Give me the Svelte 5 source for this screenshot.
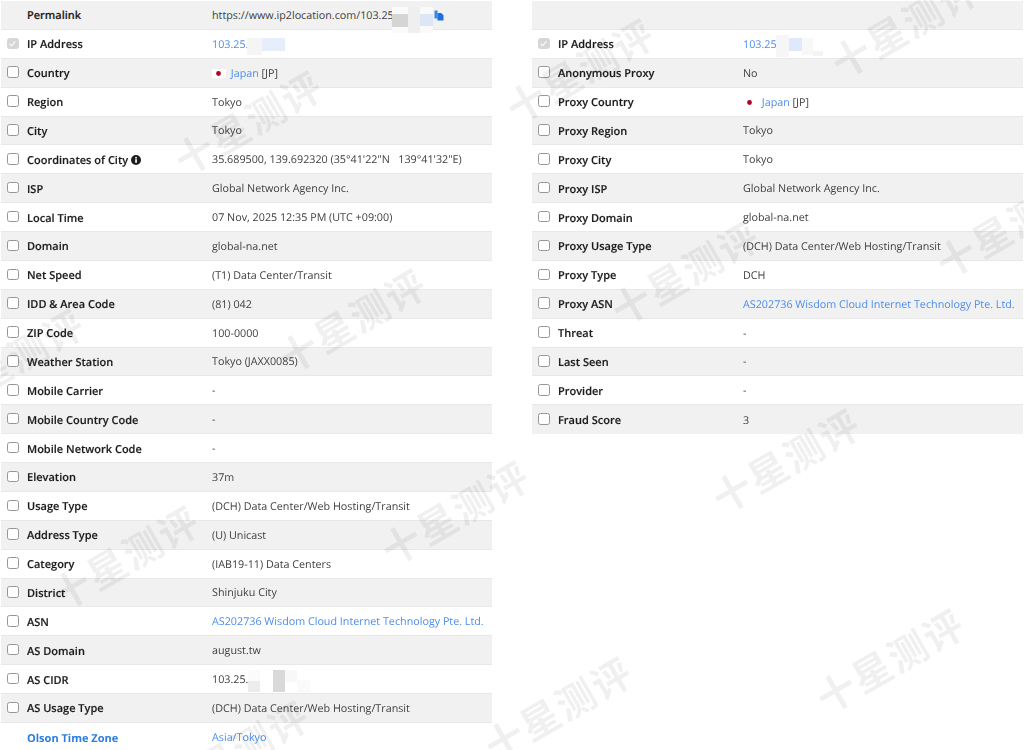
<script>
	const left = [
		{ label: 'Permalink', value: 'https://www.ip2location.com/103.25', check: 'none', copy: true },
		{ label: 'IP Address', value: '103.25.', link: true, check: 'locked' },
		{ label: 'Country', country: true },
		{ label: 'Region', value: 'Tokyo' },
		{ label: 'City', value: 'Tokyo' },
		{ label: 'Coordinates of City', value: '35.689500, 139.692320 (35°41\'22"N \u00a0 139°41\'32"E)', info: true },
		{ label: 'ISP', value: 'Global Network Agency Inc.' },
		{ label: 'Local Time', value: '07 Nov, 2025 12:35 PM (UTC +09:00)' },
		{ label: 'Domain', value: 'global-na.net' },
		{ label: 'Net Speed', value: '(T1) Data Center/Transit' },
		{ label: 'IDD & Area Code', value: '(81) 042' },
		{ label: 'ZIP Code', value: '100-0000' },
		{ label: 'Weather Station', value: 'Tokyo (JAXX0085)' },
		{ label: 'Mobile Carrier', value: '-' },
		{ label: 'Mobile Country Code', value: '-' },
		{ label: 'Mobile Network Code', value: '-' },
		{ label: 'Elevation', value: '37m' },
		{ label: 'Usage Type', value: '(DCH) Data Center/Web Hosting/Transit' },
		{ label: 'Address Type', value: '(U) Unicast' },
		{ label: 'Category', value: '(IAB19-11) Data Centers' },
		{ label: 'District', value: 'Shinjuku City' },
		{ label: 'ASN', value: 'AS202736 Wisdom Cloud Internet Technology Pte. Ltd.', link: true },
		{ label: 'AS Domain', value: 'august.tw' },
		{ label: 'AS CIDR', value: '103.25.' },
		{ label: 'AS Usage Type', value: '(DCH) Data Center/Web Hosting/Transit' },
		{ label: 'Olson Time Zone', value: 'Asia/Tokyo', link: true, check: 'none', labelLink: true }
	];

	const right = [
		{ label: '', value: '', check: 'none' },
		{ label: 'IP Address', value: '103.25', link: true, check: 'locked' },
		{ label: 'Anonymous Proxy', value: 'No' },
		{ label: 'Proxy Country', country: true },
		{ label: 'Proxy Region', value: 'Tokyo' },
		{ label: 'Proxy City', value: 'Tokyo' },
		{ label: 'Proxy ISP', value: 'Global Network Agency Inc.' },
		{ label: 'Proxy Domain', value: 'global-na.net' },
		{ label: 'Proxy Usage Type', value: '(DCH) Data Center/Web Hosting/Transit' },
		{ label: 'Proxy Type', value: 'DCH' },
		{ label: 'Proxy ASN', value: 'AS202736 Wisdom Cloud Internet Technology Pte. Ltd.', link: true },
		{ label: 'Threat', value: '-' },
		{ label: 'Last Seen', value: '-' },
		{ label: 'Provider', value: '-' },
		{ label: 'Fraud Score', value: '3' }
	];

	// centre points of the repeated watermark
	const marks = [
		[248, 122], [352, 320], [455, 512], [558, 708],
		[580, 70], [685, 272], [786, 460], [890, 660],
		[905, 25], [1010, 225], [10, 360], [125, 557], [235, 752]
	];

	// mosaic patches over the masked addresses: x, y, w, h, colour
	const patches = [
		// permalink
		[392, 7, 41, 26, '#fafafa'],
		[392, 14, 16, 13, '#d4d6d4'],
		[408, 7, 12, 26, '#efefef'],
		[420, 14, 13, 12, '#dde6f6'],
		// left ip
		[247, 38, 15, 17, '#f5f5f5'],
		[262, 38, 23, 13, '#e6eefc'],
		// right ip
		[776, 35, 13, 22, '#f6f6f8'],
		[789, 38, 13, 13, '#dfe9fb'],
		[802, 38, 11, 17, '#f8f8f8'],
		[813, 51, 10, 5, '#f4f4f4'],
		// cidr
		[248, 670, 12, 11, '#fbfbfb'],
		[248, 681, 12, 11, '#ececec'],
		[273, 670, 12, 22, '#d9d9d9'],
		[285, 670, 12, 12, '#f8f8f8'],
		[297, 680, 13, 12, '#fafafa']
	];
</script>

{#snippet checkbox(kind)}
	{#if kind === 'locked'}
		<span class="box locked">
			<svg viewBox="0 0 12 12" width="11" height="11"><path d="M2.8 6.2 5 8.4 9.2 3.6" fill="none" stroke="#f4f4f4" stroke-width="1.6" /></svg>
		</span>
	{:else if kind === 'none'}
		<span class="box empty"></span>
	{:else}
		<span class="box"></span>
	{/if}
{/snippet}

{#snippet table(rows)}
	<div class="table">
		{#each rows as row}
			<div class="row">
				{@render checkbox(row.check)}
				<div class="label" class:link={row.labelLink}>
					{row.label}
					{#if row.info}
						<svg class="info" viewBox="0 0 10 10" width="10" height="10">
							<circle cx="5" cy="5" r="5" fill="#1d1d1d" />
							<rect x="4.2" y="4.2" width="1.7" height="3.6" fill="#fff" />
							<rect x="4.2" y="2" width="1.7" height="1.5" fill="#fff" />
						</svg>
					{/if}
				</div>
				<div class="value">
					{#if row.country}
						<svg class="flag" viewBox="0 0 14 9" width="14" height="9">
							<rect width="14" height="9" fill="#fff" />
							<circle cx="6.5" cy="4.5" r="2.4" fill="#b8001f" />
						</svg>
						<span class="blue">Japan</span> [JP]
					{:else if row.link}
						<span class="blue">{row.value}</span>
					{:else}
						{row.value}
					{/if}
				</div>
			</div>
		{/each}
	</div>
{/snippet}

<div class="page">
	{@render table(left)}
	{@render table(right)}

	<svg class="copy" viewBox="0 0 10 11" width="10" height="11">
		<path d="M0.5 0.5h3v8h-3z" fill="#3a86e6" />
		<path d="M3.5 3h3.7L9.5 5.2V10.5H3.5z" fill="#1f6fdc" />
	</svg>

	{#each patches as [x, y, w, h, c]}
		<div class="patch" style="left:{x}px;top:{y}px;width:{w}px;height:{h}px;background:{c}"></div>
	{/each}

	{#each marks as [x, y]}
		<div class="mark" style="left:{x}px;top:{y}px">十星测评</div>
	{/each}
</div>

<style>
	:global(body) {
		margin: 0;
		background: #fff;
	}

	.page {
		position: relative;
		width: 1024px;
		height: 750px;
		overflow: hidden;
		display: flex;
		gap: 40px;
		padding: 1px 0 0 1px;
		box-sizing: border-box;
		font-family: 'Open Sans', sans-serif;
		font-size: 10.75px;
		color: #404040;
		text-rendering: geometricPrecision;
		filter: blur(0.35px);
	}

	.table {
		width: 491px;
		flex: none;
	}

	.row {
		display: flex;
		align-items: center;
		height: 28.88px;
		padding-top: 2px;
		box-sizing: border-box;
		border-bottom: 1px solid #e8e8e8;
	}

	.row:nth-child(odd) {
		background: #f1f1f1;
	}

	.row:last-child {
		border-bottom: none;
	}

	.box {
		flex: none;
		width: 11.5px;
		height: 11.5px;
		margin: -3px 8.5px 0 6px;
		border: 1px solid #969696;
		border-radius: 2.5px;
		background: #fff;
		box-sizing: border-box;
	}

	.box.empty {
		border: none;
		background: none;
	}

	.box.locked {
		border-color: #d6d6d6;
		background: #d6d6d6;
		display: flex;
		align-items: center;
		justify-content: center;
	}

	.box.locked svg {
		flex: none;
	}

	.label {
		width: 185px;
		flex: none;
		font-size: 11px;
		font-weight: 600;
		color: #1c1c1c;
		-webkit-text-stroke: 0.15px #1c1c1c;
		white-space: nowrap;
	}

	.label.link {
		font-weight: 700;
		color: #2b7de0;
		-webkit-text-stroke: 0;
	}

	.info {
		vertical-align: -1px;
	}

	.value {
		white-space: nowrap;
	}

	.blue {
		color: #4d8dea;
	}

	.flag {
		margin-right: 2px;
		vertical-align: -1px;
	}

	.copy {
		position: absolute;
		left: 434px;
		top: 10px;
	}

	.patch {
		position: absolute;
		filter: blur(0.6px);
	}

	.mark {
		position: absolute;
		transform: translate(-50%, -50%) rotate(-30deg);
		font-family: 'Noto Sans CJK SC', sans-serif;
		font-size: 39px;
		font-weight: 700;
		letter-spacing: 2px;
		white-space: nowrap;
		color: rgba(0, 0, 0, 0.06);
		pointer-events: none;
	}
</style>
